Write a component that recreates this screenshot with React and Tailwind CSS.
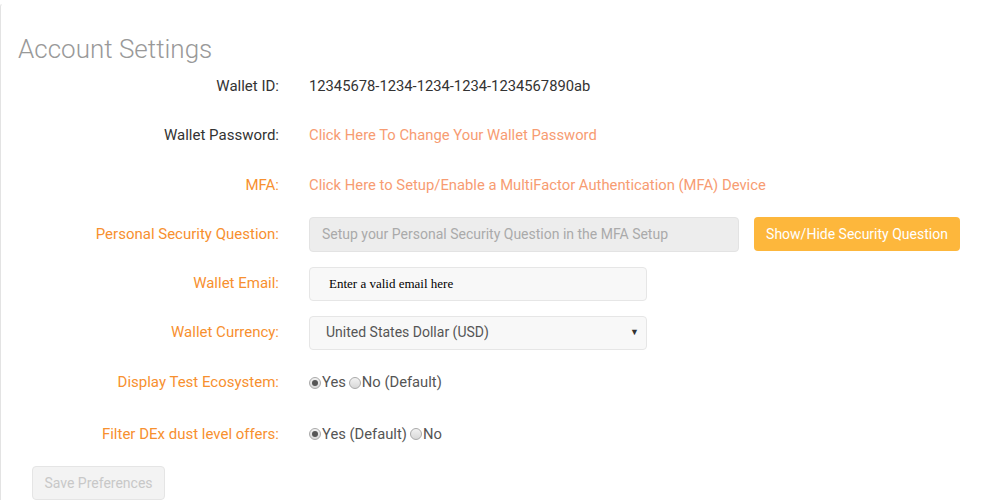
import { useState } from "react";

const labelOrange = "text-[#f7902f]";

// Fake radio so it looks like the old grey browser radio in the screenshot
const Radio = ({ checked }) => (
  <span className="inline-flex items-center justify-center w-[12px] h-[12px] rounded-full border border-[#a9a9a9] bg-gradient-to-b from-[#f2f2f2] to-[#d8d8d8] mr-px">
    {checked && <span className="w-[6px] h-[6px] rounded-full bg-[#555]"></span>}
  </span>
);

const Row = ({ label, orange, height, children }) => (
  <div className={`flex items-center ${height}`}>
    <div
      className={`w-[278px] text-right text-[15px] ${
        orange ? labelOrange : "text-[#333]"
      }`}
    >
      {label}
    </div>
    <div className="ml-[30px] flex items-center">{children}</div>
  </div>
);

export default function App() {
  const [testEco, setTestEco] = useState("yes");
  const [dust, setDust] = useState("yes");

  return (
    <div
      className="w-[1003px] h-[500px] overflow-hidden bg-white"
      style={{ fontFamily: "Roboto, 'Liberation Sans', sans-serif" }}
    >
      <div className="mt-[3px] h-[497px] border-l border-t border-[#e3e3e3] border-t-white rounded-tl-[4px]">
        <div className="pt-[30px] pl-[17px] text-[26px] leading-[30px] font-light text-[#999]">
          Account Settings
        </div>

        <Row label="Wallet ID:" height="h-[45px]">
          <span className="text-[14.75px] text-[#333]">
            12345678-1234-1234-1234-1234567890ab
          </span>
        </Row>

        <Row label="Wallet Password:" height="h-[52px]">
          <a className="text-[14.8px] text-[#f79c72] cursor-pointer">
            Click Here To Change Your Wallet Password
          </a>
        </Row>

        <Row label="MFA:" orange height="h-[48px]">
          <a className="text-[14.8px] text-[#f79c72] cursor-pointer">
            Click Here to Setup/Enable a MultiFactor Authentication (MFA) Device
          </a>
        </Row>

        <Row label="Personal Security Question:" orange height="h-[50px]">
          <div className="w-[430px] h-[35px] flex items-center px-[12px] bg-[#ededed] border border-[#e3e3e3] rounded-[4px] text-[14px] text-[#aaa]">
            Setup your Personal Security Question in the MFA Setup
          </div>
          <button
            type="button"
            className="ml-[15px] w-[206px] h-[34px] bg-[#fdb73c] rounded-[4px] text-[14px] text-white"
          >
            Show/Hide Security Question
          </button>
        </Row>

        <Row label="Wallet Email:" orange height="h-[49px]">
          <div className="w-[338px] h-[34px] flex items-center pl-[19px] bg-[#f8f8f8] border border-[#e6e6e6] rounded-[4px]">
            <span
              className="text-[13px] text-black"
              style={{ fontFamily: "'Liberation Serif', serif" }}
            >
              Enter a valid email here
            </span>
          </div>
        </Row>

        <Row label="Wallet Currency:" orange height="h-[49px]">
          <div className="w-[338px] h-[34px] flex items-center justify-between pl-[16px] pr-[7px] bg-[#f8f8f8] border border-[#e6e6e6] rounded-[4px] text-[14px] text-[#555]">
            <span>United States Dollar (USD)</span>
            <span className="text-[9px] text-[#333]">▼</span>
          </div>
        </Row>

        <Row label="Display Test Ecosystem:" orange height="h-[51px]">
          <label className="flex items-center text-[14.75px] text-[#555] cursor-pointer" onClick={() => setTestEco("yes")}>
            <Radio checked={testEco === "yes"} />
            Yes
          </label>
          <label className="ml-[3px] flex items-center text-[14.75px] text-[#555] cursor-pointer" onClick={() => setTestEco("no")}>
            <Radio checked={testEco === "no"} />
            No (Default)
          </label>
        </Row>

        <Row label="Filter DEx dust level offers:" orange height="h-[52px]">
          <label className="flex items-center text-[14.75px] text-[#555] cursor-pointer" onClick={() => setDust("yes")}>
            <Radio checked={dust === "yes"} />
            Yes (Default)
          </label>
          <label className="ml-[3px] flex items-center text-[14.75px] text-[#555] cursor-pointer" onClick={() => setDust("no")}>
            <Radio checked={dust === "no"} />
            No
          </label>
        </Row>

        <div className="pl-[31px] pt-[6px]">
          <button
            type="button"
            disabled
            className="w-[133px] h-[34px] bg-[#f3f3f3] border border-[#e5e5e5] rounded-[4px] text-[14px] text-[#c8c8c8]"
          >
            Save Preferences
          </button>
        </div>
      </div>
    </div>
  );
}
